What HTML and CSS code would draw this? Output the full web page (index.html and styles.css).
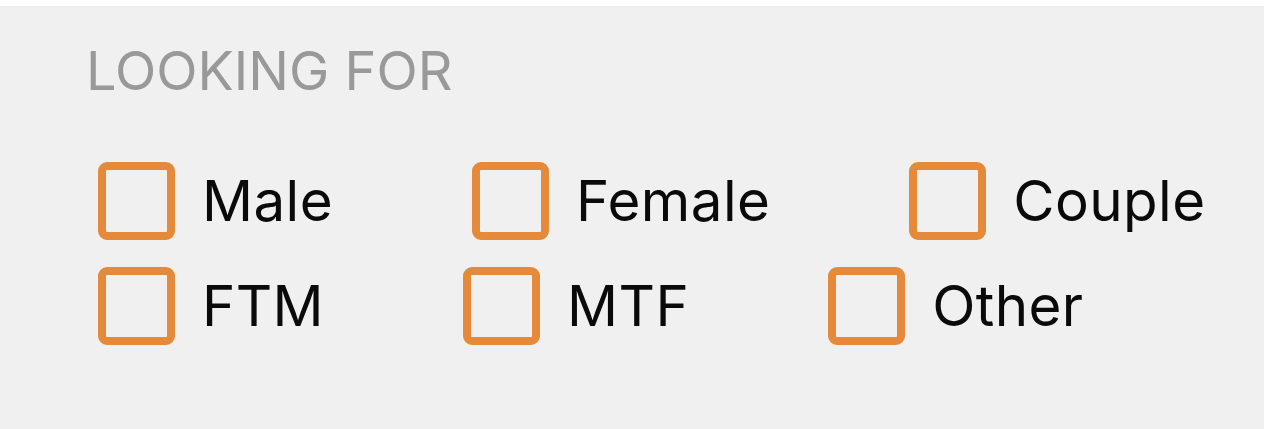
FILE: index.html
```html
<!DOCTYPE html>
<html>
<head>
<meta charset="utf-8">
<link rel="stylesheet" href="styles.css">
</head>
<body>
<section class="panel">
  <h2 class="title">LOOKING FOR</h2>
  <div class="options">
    <div class="row">
      <label class="opt"><span class="box"></span><span class="txt">Male</span></label>
      <label class="opt"><span class="box"></span><span class="txt">Female</span></label>
      <label class="opt"><span class="box"></span><span class="txt">Couple</span></label>
    </div>
    <div class="row">
      <label class="opt"><span class="box"></span><span class="txt">FTM</span></label>
      <label class="opt"><span class="box"></span><span class="txt">MTF</span></label>
      <label class="opt"><span class="box"></span><span class="txt">Other</span></label>
    </div>
  </div>
</section>
</body>
</html>
```
FILE: styles.css
```css
html, body {
  margin: 0;
  padding: 0;
  background: #ffffff;
}
body {
  font-family: Inter, "Noto Sans", sans-serif;
}
.panel {
  margin: 6px 8px 0 0;
  height: 423px;
  background: #f0f0f0;
  padding: 35px 0 0 86px;
  box-sizing: border-box;
}
.title {
  margin: 0;
  font-size: 54px;
  line-height: 60px;
  font-weight: 400;
  color: #999999;
  letter-spacing: 0;
}
.options {
  margin-top: 61px;
  padding-left: 12px;
  display: flex;
  flex-direction: column;
  gap: 27px;
}
.row {
  display: flex;
  column-gap: 139px;
}
.opt {
  display: flex;
  align-items: center;
  gap: 27px;
}
.box {
  width: 77px;
  height: 78px;
  box-sizing: border-box;
  border: 8px solid #e5893b;
  border-radius: 9px;
}
.txt {
  font-size: 56.5px;
  line-height: 78px;
  letter-spacing: 0.4px;
  color: #0a0a0a;
}
```
